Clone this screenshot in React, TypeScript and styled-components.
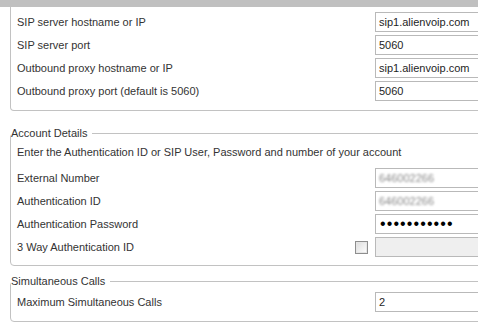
import React from "react";
import styled, { createGlobalStyle } from "styled-components";

const Global = createGlobalStyle`
  html, body { margin: 0; padding: 0; background: #ffffff; overflow: hidden; }
  body { font-family: "Liberation Sans", Arial, sans-serif; font-size: 11px; color: #333333; }
`;

const Page = styled.div`
  width: 100vw;
  height: 100vh;
  overflow: hidden;
  display: flex;
  flex-direction: column;
`;

const TopBar = styled.div`
  height: 7px;
  flex: none;
  background: #c0c0c0;
`;

const Body = styled.div`
  width: 560px;
  padding-left: 10px;
  display: flex;
  flex-direction: column;
`;

const OpenPanel = styled.div`
  border: 1px solid #c2c2c2;
  border-top: none;
  border-radius: 0 0 4px 4px;
  padding: 5px 0 9px 6px;
  display: flex;
  flex-direction: column;
  gap: 3px;
`;

const Group = styled.fieldset<{ $top: number; $padTop: number; $padBottom: number }>`
  margin: ${(p) => p.$top}px 0 0 0;
  padding: ${(p) => p.$padTop}px 0 ${(p) => p.$padBottom}px 6px;
  border: 1px solid #c2c2c2;
  border-radius: 4px;
  min-width: 0;
  display: flex;
  flex-direction: column;
  gap: 3px;
`;

const Legend = styled.legend`
  padding: 0 5px 0 0;
  margin: 0 0 0 -6px;
  font-size: 11px;
  line-height: 14px;
  color: #333333;
`;

const Instruction = styled.div`
  line-height: 20px;
  margin-bottom: 3px;
  white-space: nowrap;
`;

const Row = styled.div`
  display: grid;
  grid-template-columns: 358px 160px;
  height: 20px;
  align-items: center;
`;

const LabelCell = styled.div`
  display: flex;
  align-items: center;
  justify-content: space-between;
  white-space: nowrap;
`;

const Check = styled.span`
  width: 13px;
  height: 13px;
  box-sizing: border-box;
  border: 1px solid #8e8e8e;
  background: linear-gradient(135deg, #dcdcdc 0%, #f4f4f4 70%, #ffffff 100%);
  box-shadow: inset 0 0 0 1px #e6e6e6;
  margin-right: 7px;
`;

const Field = styled.div<{ $disabled?: boolean }>`
  height: 20px;
  box-sizing: border-box;
  border: 1px solid #b9b9b9;
  background: ${(p) => (p.$disabled ? "#efefef" : "#ffffff")};
  padding: 0 3px;
  line-height: 18px;
  font-size: 11px;
  color: #1e1e1e;
  white-space: nowrap;
  overflow: hidden;
`;

const Blurred = styled.span`
  display: inline-block;
  color: #8a8a8a;
  filter: blur(1.1px);
`;

const Dots = styled.span`
  font-size: 16px;
  letter-spacing: 1.1px;
  color: #000000;
  line-height: 18px;
  padding-left: 1px;
`;

type Item = { label: string; value?: React.ReactNode; check?: boolean; disabled?: boolean };

const FormRow = ({ label, value, check, disabled }: Item) => (
  <Row>
    <LabelCell>
      <span>{label}</span>
      {check && <Check />}
    </LabelCell>
    <Field $disabled={disabled}>{value}</Field>
  </Row>
);

export default function App() {
  return (
    <>
      <Global />
      <Page>
        <TopBar />
        <Body>
          <OpenPanel>
            <FormRow label="SIP server hostname or IP" value="sip1.alienvoip.com" />
            <FormRow label="SIP server port" value="5060" />
            <FormRow label="Outbound proxy hostname or IP" value="sip1.alienvoip.com" />
            <FormRow label="Outbound proxy port (default is 5060)" value="5060" />
          </OpenPanel>
          <Group $top={15} $padTop={2} $padBottom={8}>
            <Legend>Account Details</Legend>
            <Instruction>Enter the Authentication ID or SIP User, Password and number of your account</Instruction>
            <FormRow label="External Number" value={<Blurred>646002266</Blurred>} />
            <FormRow label="Authentication ID" value={<Blurred>646002266</Blurred>} />
            <FormRow label="Authentication Password" value={<Dots>•••••••••••</Dots>} />
            <FormRow label="3 Way Authentication ID" check disabled />
          </Group>
          <Group $top={8} $padTop={4} $padBottom={9}>
            <Legend>Simultaneous Calls</Legend>
            <FormRow label="Maximum Simultaneous Calls" value="2" />
          </Group>
        </Body>
      </Page>
    </>
  );
}
